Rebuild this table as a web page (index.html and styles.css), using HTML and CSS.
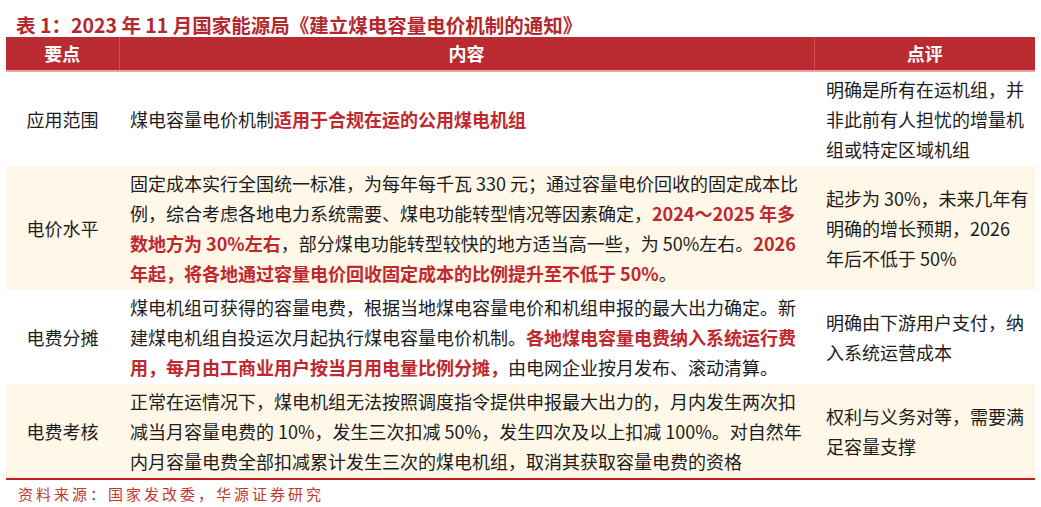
FILE: index.html
```html
<!DOCTYPE html>
<html lang="zh-CN">
<head>
<meta charset="utf-8">
<title>煤电容量电价机制</title>
<link rel="stylesheet" href="styles.css">
</head>
<body>
<div class="title">表 1：2023 年 11 月国家能源局《建立煤电容量电价机制的通知》</div>
<table class="tbl">
  <colgroup>
    <col class="c1"><col class="c2"><col class="c3">
  </colgroup>
  <thead>
    <tr><th>要点</th><th>内容</th><th>点评</th></tr>
  </thead>
  <tbody>
    <tr>
      <td class="key">应用范围</td>
      <td class="txt">煤电容量电价机制<b>适用于合规在运的公用煤电机组</b></td>
      <td class="note">明确是所有在运机组，并<br>非此前有人担忧的增量机<br>组或特定区域机组</td>
    </tr>
    <tr class="alt">
      <td class="key">电价水平</td>
      <td class="txt">固定成本实行全国统一标准，为每年每千瓦 330 元；通过容量电价回收的固定成本比<br>例，综合考虑各地电力系统需要、煤电功能转型情况等因素确定，<b>2024～2025 年多</b><br><b>数地方为 30%左右</b>，部分煤电功能转型较快的地方适当高一些，为 50%左右。<b>2026</b><br><b>年起，将各地通过容量电价回收固定成本的比例提升至不低于 50%</b>。</td>
      <td class="note">起步为 30%，未来几年有<br>明确的增长预期，2026<br>年后不低于 50%</td>
    </tr>
    <tr>
      <td class="key">电费分摊</td>
      <td class="txt">煤电机组可获得的容量电费，根据当地煤电容量电价和机组申报的最大出力确定。新<br>建煤电机组自投运次月起执行煤电容量电价机制。<b>各地煤电容量电费纳入系统运行费</b><br><b>用，每月由工商业用户按当月用电量比例分摊，</b>由电网企业按月发布、滚动清算。</td>
      <td class="note">明确由下游用户支付，纳<br>入系统运营成本</td>
    </tr>
    <tr class="alt last">
      <td class="key">电费考核</td>
      <td class="txt">正常在运情况下，煤电机组无法按照调度指令提供申报最大出力的，月内发生两次扣<br>减当月容量电费的 10%，发生三次扣减 50%，发生四次及以上扣减 100%。对自然年<br>内月容量电费全部扣减累计发生三次的煤电机组，取消其获取容量电费的资格</td>
      <td class="note">权利与义务对等，需要满<br>足容量支撑</td>
    </tr>
  </tbody>
</table>
<div class="source">资料来源：国家发改委，华源证券研究</div>
</body>
</html>
```
FILE: styles.css
```css
html, body {
  margin: 0;
  padding: 0;
  background: #ffffff;
}
body {
  width: 1041px;
  height: 507px;
  overflow: hidden;
  font-family: "Noto Sans CJK SC", "Noto Sans", sans-serif;
  color: #1c1c1c;
}
.title {
  height: 25px;
  padding: 12px 0 0 16px;
  font-size: 19.5px;
  line-height: 25px;
  font-weight: 700;
  color: #b3282d;
  white-space: nowrap;
}
.tbl {
  margin-left: 6px;
  width: 1029px;
  border-collapse: collapse;
  table-layout: fixed;
  font-size: 18px;
  line-height: 30px;
}
.c1 { width: 113px; }
.c2 { width: 695px; }
.c3 { width: 221px; }
.tbl th {
  height: 33px;
  padding: 0;
  background: #b92b30;
  color: #ffffff;
  font-weight: 700;
  font-size: 18px;
  line-height: 33px;
  text-align: center;
  border-left: 1px solid #cc5054;
  border-bottom: 2px solid #e9a5a5;
}
.tbl th:first-child { border-left: none; }
.tbl td {
  padding: 2px 11px;
  vertical-align: middle;
  white-space: nowrap;
}
.tbl td.key {
  text-align: center;
  padding: 2px 0;
}
.tbl td.note {
  padding-left: 12px;
}
.tbl b {
  color: #c0282e;
  font-weight: 700;
}
.tbl tr.alt td {
  background: #fff7e7;
}
.tbl tr.last td {
  border-bottom: 2px solid #c41e1e;
}
.source {
  padding-left: 18px;
  font-size: 15px;
  line-height: 28px;
  letter-spacing: 3px;
  color: #c0392b;
}
```
